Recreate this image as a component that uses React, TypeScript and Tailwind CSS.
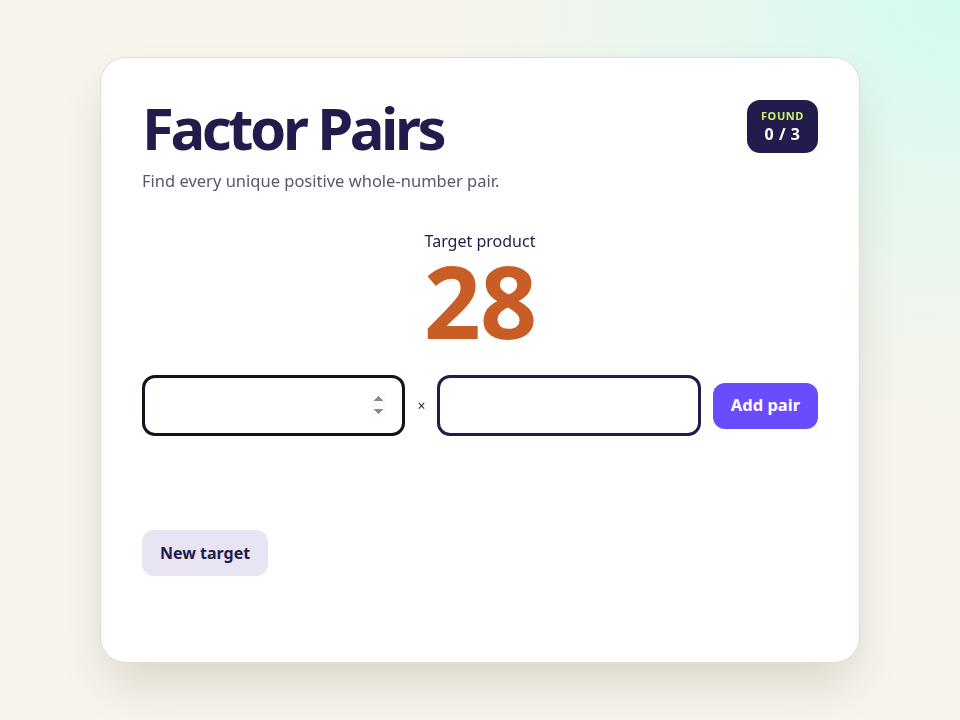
import React from "react";

export default function App() {
  return (
    <div
      className="min-h-[720px] w-full flex items-start justify-center pt-[57px]"
      style={{
        fontFamily: '"Noto Sans", "Open Sans", sans-serif',
      }}
    >
      <div className="fixed inset-0 -z-10 bg-[#f7f4ec] bg-[radial-gradient(ellipse_520px_420px_at_100%_0%,#d2fcee_0%,#e2f8ee_35%,#f7f4ec_100%)]" />
      <div className="w-[760px] h-[606px] bg-white rounded-[26px] border border-[#dedcd6] shadow-[0_26px_50px_-10px_rgba(60,50,30,0.18)] px-[41px] pt-[36px] flex flex-col">
        <div className="flex items-start justify-between">
          <div>
            <h1 className="text-[58px] leading-[68px] font-bold tracking-[-3.4px] text-[#221b4b]">
              Factor Pairs
            </h1>
            <p className="mt-[8px] text-[16.5px] leading-[22px] text-[#5a5570]">
              Find every unique positive whole-number pair.
            </p>
          </div>
          <div className="mt-[6px] w-[71px] h-[53px] rounded-[13px] bg-[#221b4b] flex flex-col items-center pt-[8px]">
            <span className="text-[11px] leading-[15px] font-bold tracking-[0.6px] text-[#c6f36e]">
              FOUND
            </span>
            <span className="text-[16px] leading-[22px] font-bold text-white tracking-[0.5px]">
              0 / 3
            </span>
          </div>
        </div>

        <div className="mt-[39px] flex flex-col items-center">
          <span className="text-[16px] leading-[20px] text-[#221b4b]">Target product</span>
          <span className="text-[100px] leading-[98px] font-bold text-[#c85e26] tracking-[-1px]">
            28
          </span>
        </div>

        <div className="mt-[26px] flex items-center gap-3">
          <input
            type="number"
            autoFocus
            className="flex-1 min-w-0 h-[61px] rounded-[13px] border-[3px] border-[#221b4b] focus:border-[#14121f] outline-none px-4 text-[20px] bg-white"
          />
          <span className="text-[14px] text-[#221b4b]">×</span>
          <input
            type="number"
            className="flex-1 min-w-0 h-[61px] rounded-[13px] border-[3px] border-[#221b4b] outline-none px-4 text-[20px] bg-white"
          />
          <button className="h-[46px] px-[18px] rounded-[12px] bg-[#6a4cff] text-white text-[16.5px] font-bold">
            Add pair
          </button>
        </div>

        <div className="mt-[94px]">
          <button className="h-[46px] px-[18px] rounded-[12px] bg-[#e8e4f4] text-[#221b4b] text-[16px] font-bold">
            New target
          </button>
        </div>
      </div>
    </div>
  );
}
